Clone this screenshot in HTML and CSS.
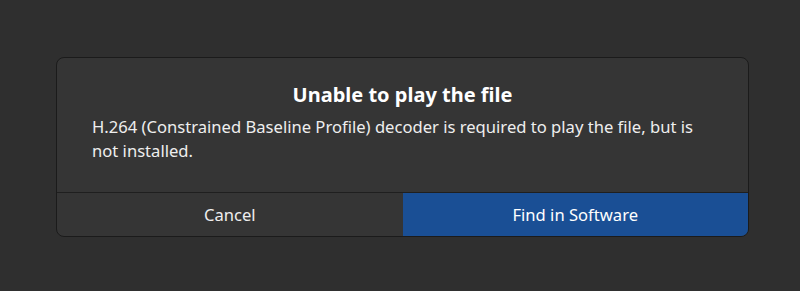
FILE: index.html
```html
<!DOCTYPE html>
<html lang="en">
<head>
    <meta charset="UTF-8">
    <meta name="viewport" content="width=device-width, initial-scale=1.0">
    <title>Unable to play the file</title>
    <link rel="stylesheet" href="styles.css">
</head>
<body>
    <div class="dialog">
        <div class="dialog-body">
            <h2 class="dialog-title">Unable to play the file</h2>
            <p class="dialog-text">H.264 (Constrained Baseline Profile) decoder is required to play the file, but is not installed.</p>
        </div>
        <div class="dialog-actions">
            <button class="btn">Cancel</button>
            <button class="btn btn-suggested">Find in Software</button>
        </div>
    </div>
</body>
</html>
```

FILE: styles.css
```css
html, body {
    margin: 0;
    height: 100%;
}
body {
    background-color: #2f2f2f;
    font-family: "Noto Sans", "Open Sans", sans-serif;
    color: #ffffff;
    padding: 57px 51px 0 56px;
    box-sizing: border-box;
}
.dialog {
    background-color: #353535;
    border: 1px solid #1b1b1b;
    border-radius: 8px;
    overflow: hidden;
}
.dialog-body {
    padding: 25px 28px 29px;
}
.dialog-title {
    margin: 0;
    font-size: 20px;
    font-weight: bold;
    line-height: 24px;
    text-align: center;
}
.dialog-text {
    margin: 8px 0 0;
    padding-left: 7px;
    font-size: 16.6px;
    line-height: 24px;
    color: #eeeeee;
}
.dialog-actions {
    display: flex;
    border-top: 1px solid #1f1f1f;
}
.btn {
    flex: 1;
    height: 43px;
    border: none;
    background: transparent;
    color: #eeeeee;
    font-family: inherit;
    font-size: 16.6px;
    cursor: pointer;
}
.btn-suggested {
    background-color: #1a4f95;
    color: #ffffff;
}
```
